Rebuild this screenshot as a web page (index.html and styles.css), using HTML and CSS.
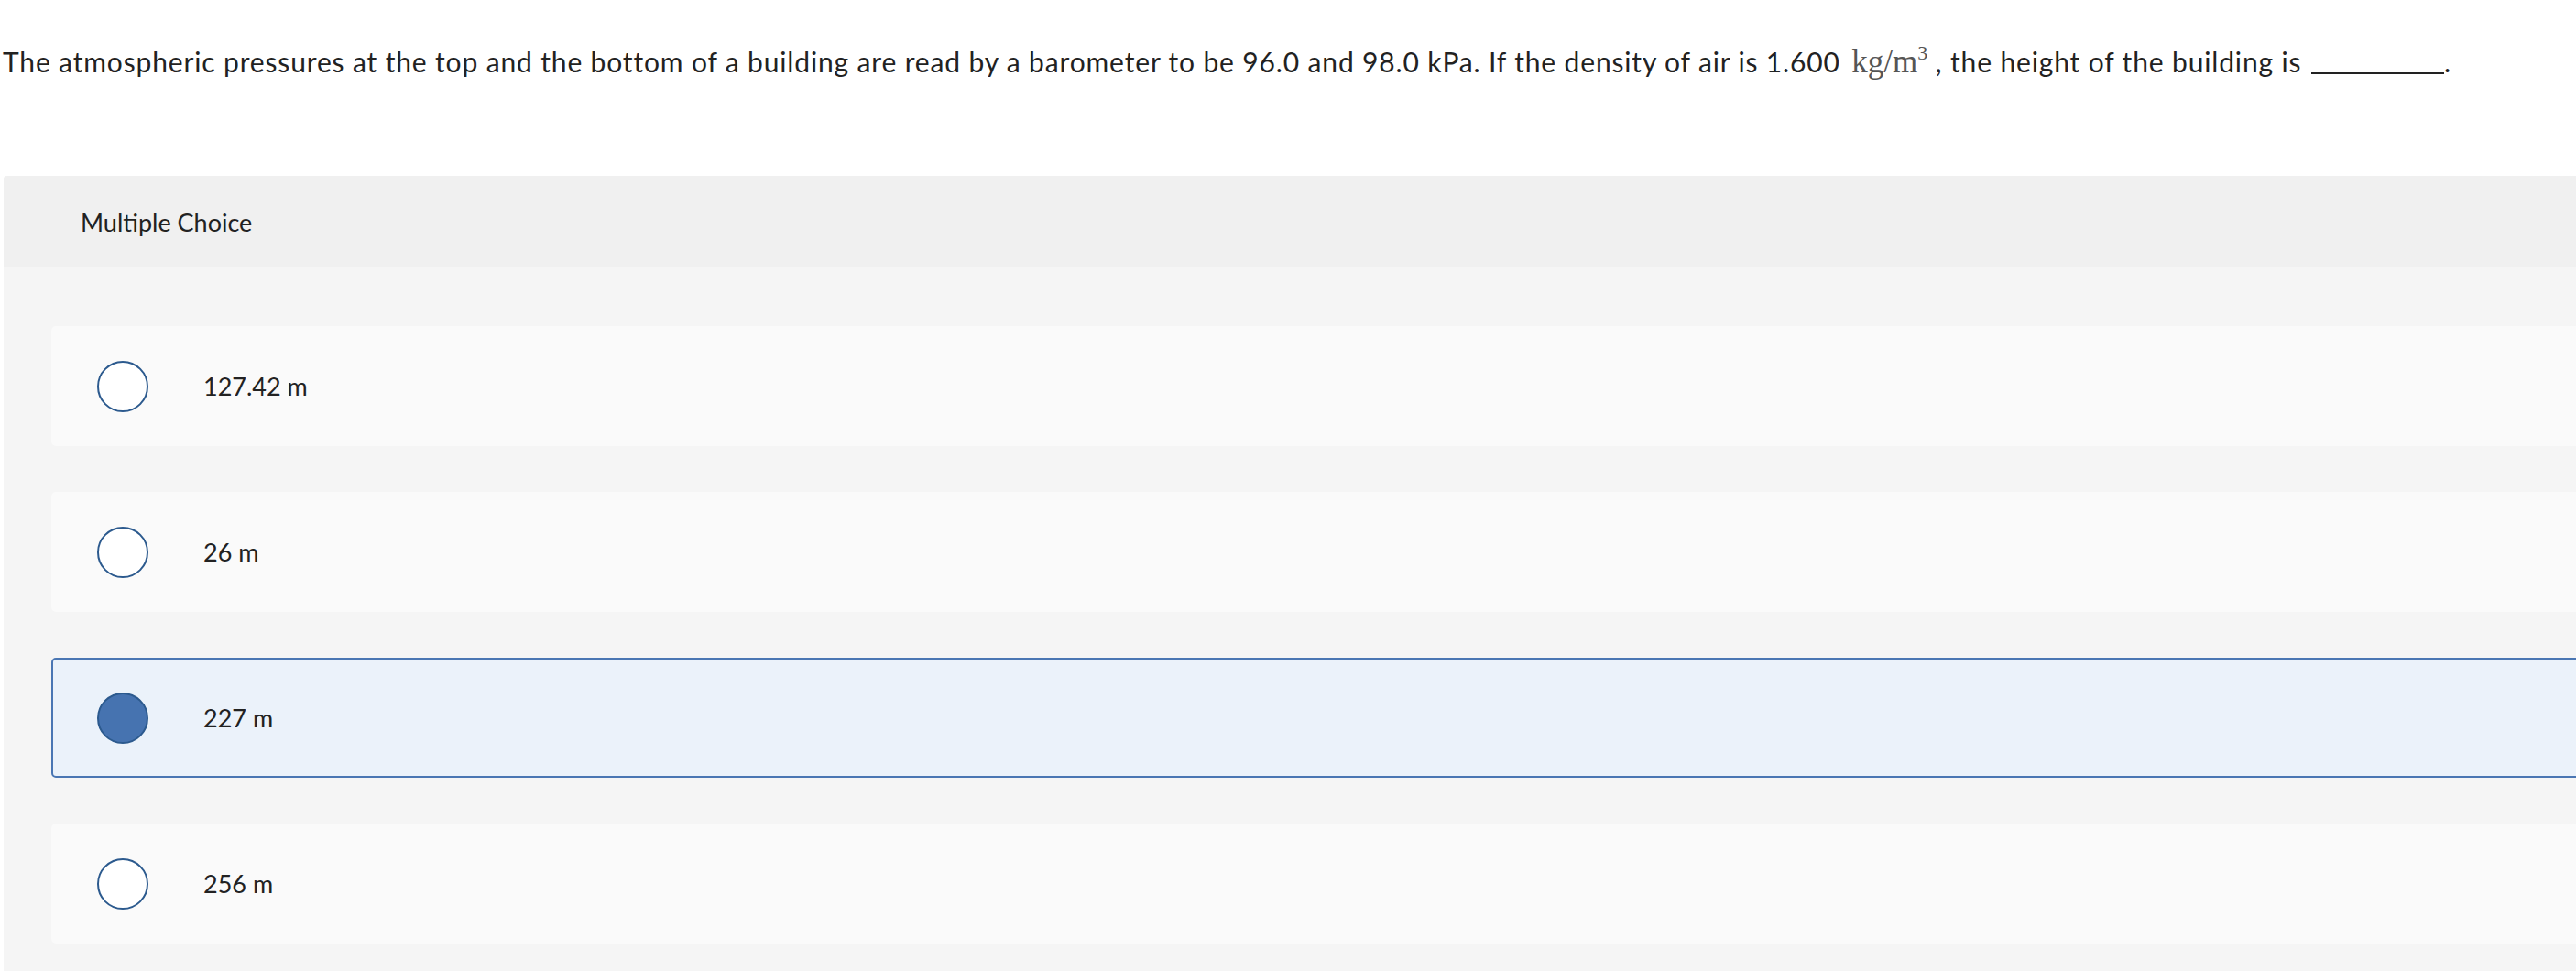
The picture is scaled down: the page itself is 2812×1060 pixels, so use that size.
FILE: index.html
```html
<!DOCTYPE html>
<html>
<head>
<meta charset="utf-8">
<link rel="stylesheet" href="styles.css">
</head>
<body>
<p class="question">The atmospheric pressures at the top and the bottom of a building are read by a barometer to be 96.0 and 98.0 kPa. If the density of air is 1.600 <span class="math">kg/m<sup>3</sup></span> , the height of the building is <span class="blank"></span>.</p>
<section class="panel">
  <div class="panel-head">Multiple Choice</div>
  <div class="panel-body">
    <label class="option"><span class="radio"></span><span class="opt-text">127.42 m</span></label>
    <label class="option"><span class="radio"></span><span class="opt-text">26 m</span></label>
    <label class="option selected"><span class="radio"></span><span class="opt-text">227 m</span></label>
    <label class="option"><span class="radio"></span><span class="opt-text">256 m</span></label>
  </div>
</section>
</body>
</html>
```

FILE: styles.css
```css
html, body {
  margin: 0;
  padding: 0;
  background: #ffffff;
  overflow: hidden;
}
body {
  font-family: "Lato", "Liberation Sans", sans-serif;
  color: #222222;
}
.question {
  margin: 0;
  padding: 47px 0 0 3px;
  font-size: 30px;
  line-height: 40px;
  height: 40px;
  white-space: nowrap;
  letter-spacing: 0.85px;
}
.math {
  font-family: "Liberation Serif", serif;
  font-size: 35px;
  color: #555555;
  margin-left: 4px;
  letter-spacing: 0;
}
.math sup {
  font-size: 22px;
  vertical-align: 14px;
  line-height: 0;
}
.blank {
  display: inline-block;
  width: 145px;
  border-bottom: 2px solid #222222;
  margin-left: 2px;
  vertical-align: -2px;
}
.panel {
  margin: 105px 0 0 4px;
  width: calc(100% + 200px);
  background: #f5f5f5;
  border-radius: 4px;
  height: 900px;
}
.panel-head {
  height: 100px;
  background: #f0f0f0;
  border-radius: 4px 4px 0 0;
  display: flex;
  align-items: center;
  padding-left: 84px;
  font-size: 27px;
}
.panel-body {
  padding: 64px 0 0 52px;
  display: flex;
  flex-direction: column;
  gap: 50px;
}
.option {
  box-sizing: border-box;
  height: 131px;
  background: #fafafa;
  border: 2px solid transparent;
  border-radius: 5px;
  display: flex;
  align-items: center;
  padding-left: 48px;
  gap: 60px;
  font-size: 27px;
}
.option.selected {
  background: #ebf2fa;
  border-color: #4a76b3;
}
.radio {
  box-sizing: border-box;
  width: 56px;
  height: 56px;
  border-radius: 50%;
  border: 2px solid #2c5a8e;
  background: #ffffff;
  flex: none;
}
.option.selected .radio {
  background: #4673b0;
  border-color: #2c5a8e;
}
```
